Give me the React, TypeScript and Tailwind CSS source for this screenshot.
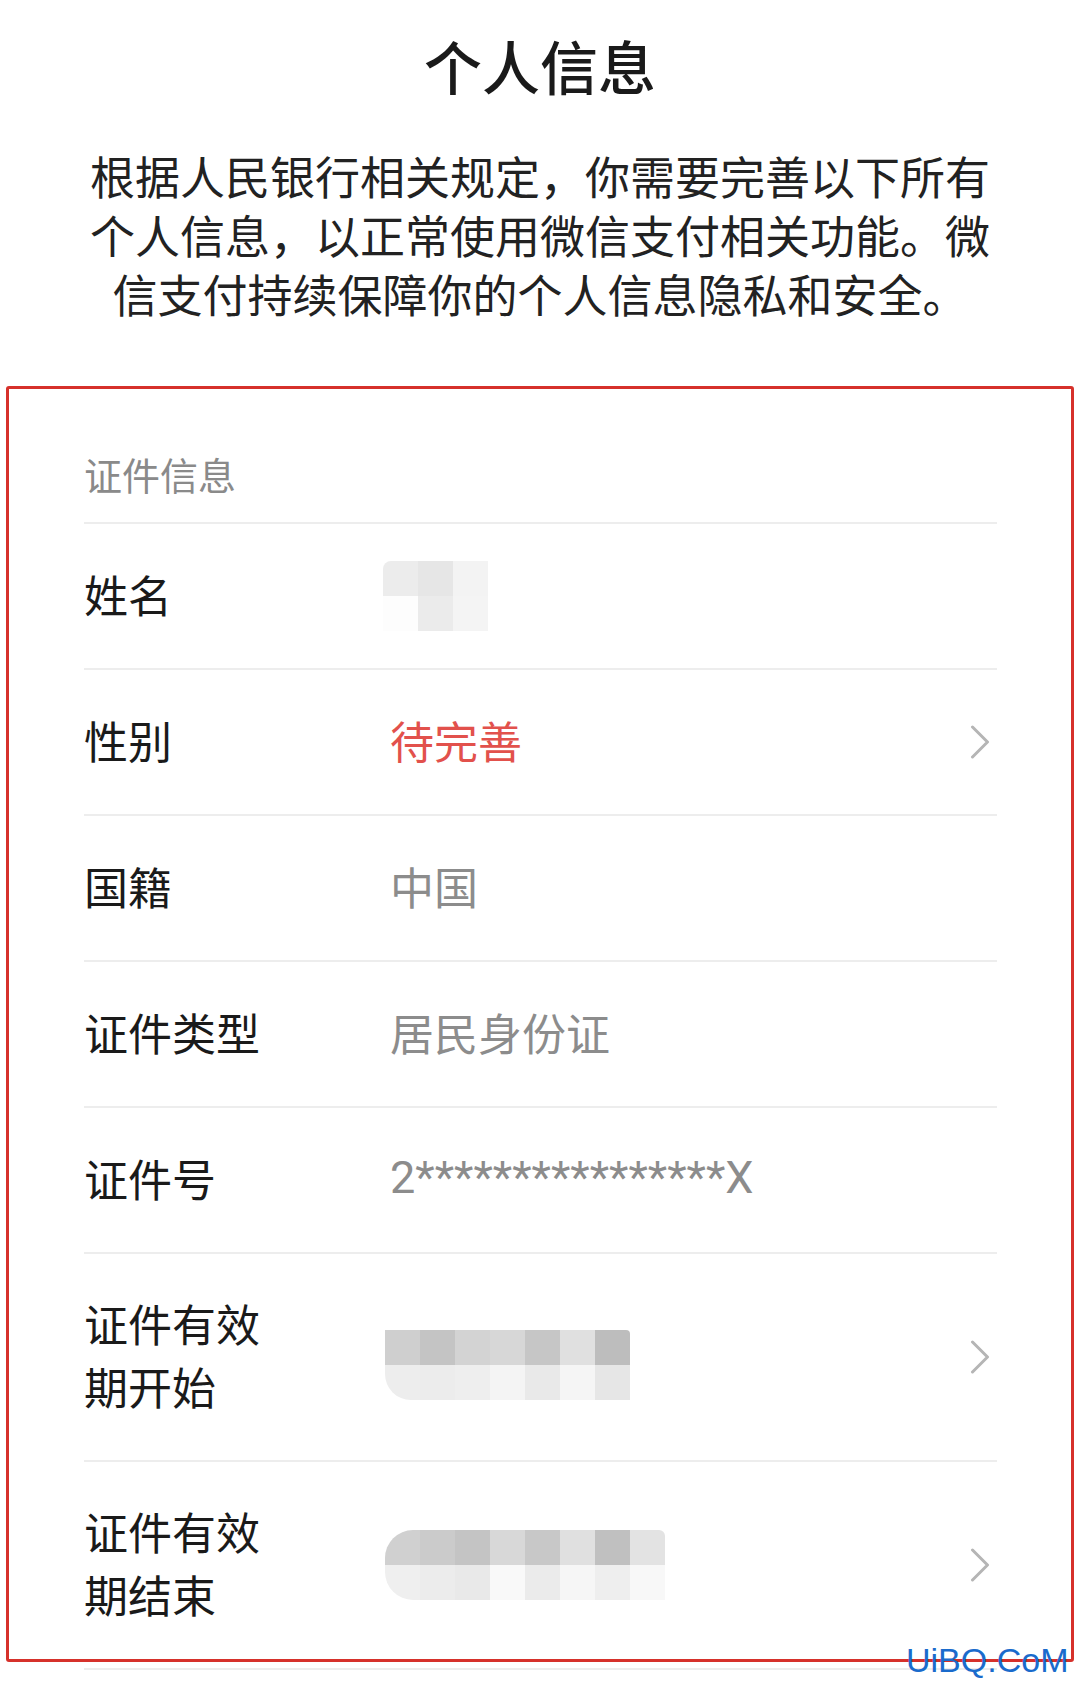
const cjk = { fontFamily: '"Noto Sans CJK SC", "Noto Sans", sans-serif' };

function Chevron() {
  return (
    <svg width="20" height="34" viewBox="0 0 20 34" className="shrink-0 mr-[7px]">
      <polyline
        points="2.5,2 17.5,17 2.5,32"
        fill="none"
        stroke="#b5b5b5"
        strokeWidth="3"
        strokeLinecap="round"
        strokeLinejoin="round"
      />
    </svg>
  );
}

// mosaic blocks standing in for the blurred values
function Mosaic({
  top,
  bottom,
  shape,
}: {
  top: string[];
  bottom: string[];
  shape: string;
}) {
  return (
    <div className={"flex flex-col overflow-hidden " + shape}>
      <div className="flex">
        {top.map((c, i) => (
          <div key={i} className="w-[35px] h-[35px]" style={{ background: c }} />
        ))}
      </div>
      <div className="flex">
        {bottom.map((c, i) => (
          <div key={i} className="w-[35px] h-[35px]" style={{ background: c }} />
        ))}
      </div>
    </div>
  );
}

function Row({
  label,
  children,
  arrow,
  tall,
}: {
  label: React.ReactNode;
  children?: React.ReactNode;
  arrow?: boolean;
  tall?: boolean;
}) {
  return (
    <div
      className={
        "flex items-center border-t-2 border-[#ededed] " +
        (tall ? "h-[208px]" : "h-[146px]")
      }
    >
      <div className="w-[306px] pb-[4px] text-[44px] leading-[63px] text-[#1a1a1a]">{label}</div>
      <div className="flex-1 flex items-center">{children}</div>
      {arrow && <Chevron />}
    </div>
  );
}

export default function App() {
  return (
    <div className="relative w-[1080px] h-[1688px] overflow-hidden bg-white" style={cjk}>
      <h1 className="pt-[30px] text-center text-[58px] leading-[70px] font-medium text-[#1a1a1a]">
        个人信息
      </h1>

      <p className="mt-[46px] text-center text-[45px] leading-[59px] text-[#222]">
        根据人民银行相关规定，你需要完善以下所有
        <br />
        个人信息，以正常使用微信支付相关功能。微
        <br />
        信支付持续保障你的个人信息隐私和安全。
      </p>

      <div className="mt-[127px] pl-[84px] pr-[83px]">
        <div className="pb-[24px] text-[38px] leading-[48px] text-[#8a8a8a]">证件信息</div>

        <Row label="姓名">
          <Mosaic
            shape="rounded-tl-[8px] -ml-[7px]"
            top={["#ececec", "#e6e6e6", "#f3f3f3"]}
            bottom={["#fdfdfd", "#ebebeb", "#f4f4f4"]}
          />
        </Row>

        <Row label="性别" arrow>
          <span className="pb-[4px] text-[44px] text-[#e2514c]">待完善</span>
        </Row>

        <Row label="国籍">
          <span className="pb-[4px] text-[44px] text-[#8c8c8c]">中国</span>
        </Row>

        <Row label="证件类型">
          <span className="pb-[4px] text-[44px] text-[#8c8c8c]">居民身份证</span>
        </Row>

        <Row label="证件号">
          <span
            className="pb-[4px] text-[45px] text-[#8c8c8c]"
            style={{ fontFamily: 'Roboto, "Liberation Sans", sans-serif' }}
          >
            2****************X
          </span>
        </Row>

        <Row
          tall
          arrow
          label={
            <>
              证件有效
              <br />
              期开始
            </>
          }
        >
          <div className="mt-[16px] -ml-[5px]">
            <Mosaic
              shape="rounded-bl-[26px] rounded-tr-[4px]"
              top={["#cfcfcf", "#c4c4c4", "#d3d3d3", "#d7d7d7", "#c6c6c6", "#e0e0e0", "#bdbdbd"]}
              bottom={["#ededed", "#ececec", "#eeeeee", "#f4f4f4", "#e9e9e9", "#f5f5f5", "#e6e6e6"]}
            />
          </div>
        </Row>

        <Row
          tall
          arrow
          label={
            <>
              证件有效
              <br />
              期结束
            </>
          }
        >
          <div className="-ml-[5px]">
            <Mosaic
              shape="rounded-l-[28px] rounded-tr-[6px]"
              top={["#d0d0d0", "#cbcbcb", "#c4c4c4", "#d8d8d8", "#c8c8c8", "#e0e0e0", "#c0c0c0", "#e3e3e3"]}
              bottom={["#efefef", "#ececec", "#e9e9e9", "#f9f9f9", "#ebebeb", "#f6f6f6", "#eeeeee", "#f8f8f8"]}
            />
          </div>
        </Row>
        <div className="border-t-2 border-[#ededed]" />
      </div>

      {/* red annotation frame drawn over the list */}
      <div className="pointer-events-none absolute left-[6px] top-[386px] w-[1068px] h-[1276px] rounded-[3px] border-[3px] border-[#d6312b]" />

      <div
        className="absolute left-[906px] top-[1640px] text-[34px] leading-[40px] text-[#1a6bcc]"
        style={{ fontFamily: '"Liberation Sans", Arial, sans-serif' }}
      >
        UiBQ.CoM
      </div>
    </div>
  );
}
